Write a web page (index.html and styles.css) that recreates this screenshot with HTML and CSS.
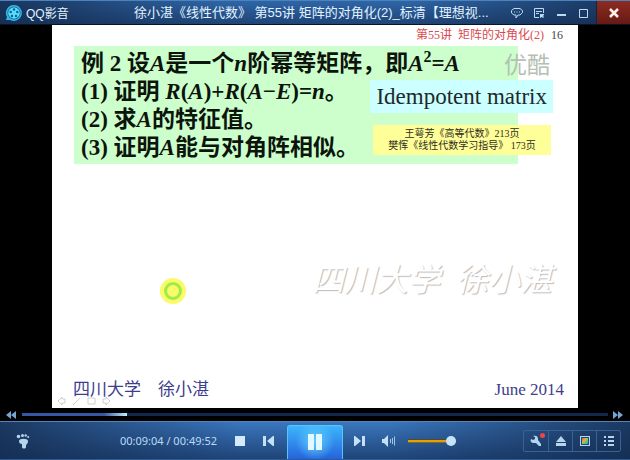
FILE: index.html
```html
<!DOCTYPE html>
<html lang="zh-CN">
<head>
<meta charset="utf-8">
<title>QQ影音</title>
<link rel="stylesheet" href="styles.css">
</head>
<body>
<div class="player">
  <header class="titlebar">
    <div class="brand">
      <svg class="logo" width="18" height="18" viewBox="0 0 18 18">
        <path d="M9 1a8 8 0 1 1-4 15H1l1-3A8 8 0 0 1 9 1z" fill="#35b6e6"/>
        <circle cx="9" cy="9" r="6.5" fill="#0b5f93"/>
        <circle cx="9" cy="9" r="5.8" fill="#58dcfa"/>
        <g fill="#0a5f94"><circle cx="9" cy="5.500" r="1.200"/><circle cx="12.300" cy="8" r="1.200"/><circle cx="11" cy="12" r="1.200"/><circle cx="7" cy="12" r="1.200"/><circle cx="5.700" cy="8" r="1.200"/></g>
      </svg>
      <span>QQ影音</span>
    </div>
    <h1 class="title">徐小湛《线性代数》 第55讲 矩阵的对角化(2)_标清【理想视...</h1>
    <div class="window-buttons">
      <button class="win" aria-label="反馈">
        <svg width="12" height="12" viewBox="0 0 12 12" fill="none" stroke="#b9dbf3"><path d="M3 1.500h6L11.500 3.500v2L9 8H7l-2 3V8H3L.5 6V3.500z"/><path d="M3.500 4.500v1M6 4.500v1M8.500 4.500v1"/></svg>
      </button>
      <button class="win" aria-label="主菜单">
        <svg width="12" height="12" viewBox="0 0 12 12" fill="none" stroke="#b9dbf3"><path d="M6 10.500H1.500v-9h9V6M3 4.500h6M3 6.500h3"/><path d="M7 7h4v1l-1 1 1 1-1 1-1-1-2 1z" fill="#b9dbf3" stroke="none"/></svg>
      </button>
      <button class="win" aria-label="最小化">
        <svg width="12" height="12" viewBox="0 0 12 12"><path d="M2 7h9v2H2z" fill="#b9dbf3"/></svg>
      </button>
      <button class="win" aria-label="最大化">
        <svg width="12" height="12" viewBox="0 0 12 12"><path d="M2.500 2.500h8v8h-8z" fill="none" stroke="#b9dbf3"/></svg>
      </button>
      <button class="win close" aria-label="关闭">
        <svg width="12" height="12" viewBox="0 0 12 12"><path d="M2 2l8 8M10 2l-8 8" stroke="#fff0ec" stroke-width="2.500"/></svg>
      </button>
    </div>
  </header>

  <main class="video">
    <article class="slide">
      <p class="lecture"><span class="lecture-name">第55讲&nbsp; 矩阵的对角化(2)</span> <span>16</span></p>
      <section class="problem">
        <p>例 2 设<i>A</i>是一个<i>n</i>阶幂等矩阵，即<i>A</i><sup>2</sup>=<i>A</i></p>
        <p>(1) 证明 <i>R</i>(<i>A</i>)+<i>R</i>(<i>A</i>−<i>E</i>)=<i>n</i>。</p>
        <p>(2) 求<i>A</i>的特征值。</p>
        <p>(3) 证明<i>A</i>能与对角阵相似。</p>
      </section>
      <span class="youku">优酷</span>
      <aside class="term">Idempotent matrix</aside>
      <aside class="refs">王萼芳《高等代数》213页<br>樊恽《线性代数学习指导》 173页</aside>
      <svg class="pointer" width="28" height="28" viewBox="0 0 28 28"><circle cx="14" cy="14" r="13" fill="#fbfb68"/><circle cx="14" cy="14" r="7.500" fill="none" stroke="#9bed4c" stroke-width="3"/></svg>
      <p class="watermark">四川大学&nbsp; 徐小湛</p>
      <svg class="slide-nav" width="54" height="10" viewBox="0 0 54 10" fill="none" stroke="#cfcfcf"><path d="M1 5l4-4v2h3v4H5v2zM16 9l7-7M31 2h7v6h-7zM53 5l-4-4v2h-3v4h3v2z"/></svg>
      <footer class="slide-footer"><span class="author">四川大学　徐小湛</span><span>June 2014</span></footer>
    </article>
  </main>

  <div class="seekbar">
    <button class="skip" aria-label="快退"><svg width="11" height="8" viewBox="0 0 11 8"><path d="M5 0v8L0 4zM10 0v8L5 4z" fill="#76a5d2"/></svg></button>
    <input class="seek" type="range" min="0" max="2992" value="544" aria-label="播放进度">
    <button class="skip" aria-label="快进"><svg width="11" height="8" viewBox="0 0 11 8"><path d="M0 0v8l5-4zM5 0v8l5-4z" fill="#76a5d2"/></svg></button>
  </div>

  <footer class="controls">
    <div class="side left">
      <button class="icon foot" aria-label="播放记录">
        <svg width="14" height="16" viewBox="0 0 14 16" fill="#b4d5ee"><circle cx="2.500" cy="3.500" r="1.800"/><circle cx="6.500" cy="2.500" r="1.500"/><circle cx="9.700" cy="2.500" r="1.200"/><circle cx="12.200" cy="4" r="1"/><path d="M3 8c0-3 9-3 9 0 0 2-1 3-2 4v2c0 2-4 2-4 0v-3C4 11 3 10 3 8z"/></svg>
      </button>
      <span class="time">00:09:04 / 00:49:52</span>
      <button class="icon stop" aria-label="停止"><svg width="12" height="12" viewBox="0 0 12 12"><path d="M1 1h10v10H1z" fill="#d2eafa"/></svg></button>
      <button class="icon" aria-label="上一个"><svg width="12" height="12" viewBox="0 0 12 12"><path d="M0 1h3v10H0zM11 1v10H10L4 6l6-5z" fill="#c5e1f6"/></svg></button>
    </div>
    <button class="pause" aria-label="暂停"><svg width="14" height="16" viewBox="0 0 14 16"><path d="M0 0h6v16H0zM8 0h6v16H8z" fill="#e4f8ff"/></svg></button>
    <div class="side right">
      <button class="icon" aria-label="下一个"><svg width="12" height="12" viewBox="0 0 12 12"><path d="M1 1v10h1l6-5-6-5zM9 1h3v10H9z" fill="#c5e1f6"/></svg></button>
      <div class="sound">
        <button class="icon" aria-label="静音"><svg width="14" height="12" viewBox="0 0 14 12"><path d="M0 4h2l4-4v12L2 8H0z" fill="#c5e1f6"/><path d="M8.500 4v4M10.500 3v6M12.500 1.500v9" stroke="#9fc6e6"/></svg></button>
        <input class="volume" type="range" min="0" max="100" value="100" aria-label="音量">
      </div>
      <div class="tools">
        <button class="tool wrench" aria-label="工具"><svg width="12" height="12" viewBox="0 0 12 12"><path d="M1 4l2 1 2-1V2L3 1c3-1 5 0 5 3v1l3 4v2H9L6 8H4C1 8 0 6 1 4z" fill="#b4d5ee"/></svg></button>
        <button class="tool" aria-label="打开"><svg width="12" height="12" viewBox="0 0 12 12"><path d="M6 1l5 6H1zM1 8h10v3H1z" fill="#b4d5ee"/></svg></button>
        <button class="tool" aria-label="画面设置"><svg width="12" height="12" viewBox="0 0 12 12"><defs><linearGradient id="hue" x2="1" y2="1"><stop stop-color="#f44336"/><stop offset=".35" stop-color="#f3a43c"/><stop offset=".65" stop-color="#5bd06c"/><stop offset="1" stop-color="#3386e8"/></linearGradient></defs><path d="M1 1h10v10H1z" fill="#b4d5ee"/><path d="M2 2h8v8H2z" fill="#18497f"/><path d="M3 3h6v6H3z" fill="url(#hue)"/></svg></button>
        <button class="tool" aria-label="播放列表"><svg width="12" height="12" viewBox="0 0 12 12"><path d="M1 1h2v2H1zM5 1h6v2H5zM1 5h2v2H1zM5 5h6v2H5zM1 9h2v2H1zM5 9h6v2H5z" fill="#b4d5ee"/></svg></button>
      </div>
    </div>
  </footer>
</div>
</body>
</html>
```
FILE: styles.css
```css
* { box-sizing: border-box; }

body {
  margin: 0;
  background: #000;
  font-family: "Liberation Sans", "Noto Sans CJK SC", sans-serif;
}

h1, p { margin: 0; }

button {
  display: flex;
  align-items: center;
  justify-content: center;
  padding: 0;
  border: 0;
  background: none;
}

input[type="range"] {
  appearance: none;
  margin: 0;
  background: none;
}

.player {
  display: flex;
  flex-direction: column;
  height: 100vh;
  overflow: hidden;
}

/* Title bar */
.titlebar {
  display: flex;
  flex: none;
  height: 25px;
  border-top: 1px solid #4a83bd;
  border-bottom: 1px solid #091425;
  background: linear-gradient(90deg, #13294acc, #13294a00 35%, #13294a00 65%, #13294acc), linear-gradient(#2f66a6, #1f4478);
  color: #e2f3ff;
}

.brand {
  display: flex;
  flex: none;
  align-items: center;
  gap: 3px;
  width: 134px;
  padding-left: 5px;
  font-size: 12px;
}

.title {
  flex: 1;
  min-width: 0;
  font-size: 13px;
  font-weight: normal;
  line-height: 24px;
  white-space: nowrap;
}

.window-buttons { display: flex; flex: none; margin-left: 10px; }
.win { width: 22px; }
.close {
  width: 34px;
  margin-left: 2px;
  border-left: 1px solid #142440;
  background: linear-gradient(#8e2b20, #661a14);
}

/* Video */
.video {
  display: flex;
  flex: 1;
  justify-content: center;
  min-height: 0;
  background: #000;
}

.slide {
  position: relative;
  display: flex;
  flex-direction: column;
  height: 100%;
  aspect-ratio: 526 / 383;
  background: #fff;
  font-family: "Liberation Serif", "Noto Sans CJK SC", serif;
}

.lecture {
  padding: 0 15px;
  color: #444;
  font-size: 12px;
  line-height: 21px;
  text-align: right;
}
.lecture-name { margin-right: 4px; color: #d94a50; }

.problem {
  margin: 0 60px 0 22px;
  padding: 4px 7px 2px;
  background: #ccffcc;
  color: #0c140c;
  font-size: 23px;
  font-weight: bold;
  line-height: 28px;
  white-space: nowrap;
}
.problem sup { font-size: 16px; line-height: 0; }

.term,
.refs,
.youku {
  position: absolute;
  text-align: center;
  white-space: nowrap;
}
.youku {
  top: 25px;
  right: 28px;
  color: #b4c0b4;
  font-size: 23px;
  line-height: 32px;
}
.term {
  top: 55px;
  right: 25px;
  padding: 0 6px;
  background: #ccffff;
  color: #20292b;
  font-size: 23px;
  line-height: 33px;
}
.refs {
  top: 100px;
  right: 27px;
  width: 178px;
  padding: 3px 0;
  background: #ffff99;
  color: #2e2e20;
  font-size: 10px;
  line-height: 12px;
}

.pointer { position: absolute; top: 252px; left: 107px; }

.watermark {
  margin: 92px 26px 0 0;
  color: #fff;
  font-size: 32px;
  font-style: italic;
  line-height: 48px;
  text-align: right;
  text-shadow: 1px 1px 1px #bbb;
}

.slide-footer {
  display: flex;
  align-items: center;
  justify-content: space-between;
  margin-top: auto;
  padding: 0 14px 6px 21px;
  color: #3d3d8c;
  font-size: 17px;
  line-height: 24px;
}
.slide-nav { position: absolute; bottom: 2px; left: 5px; }

/* Seek bar */
.seekbar {
  display: flex;
  flex: none;
  align-items: center;
  gap: 5px;
  height: 13px;
  padding: 0 6px;
}
.seek { flex: 1; min-width: 0; height: 8px; }
.seek::-webkit-slider-runnable-track {
  height: 3px;
  background: linear-gradient(90deg, #3458a5 14%, #c5f2ff 18%, #13284d 18%);
}
.seek::-webkit-slider-thumb { appearance: none; width: 1px; height: 3px; }

/* Controls */
.controls {
  display: grid;
  grid-template-columns: 1fr auto 1fr;
  flex: none;
  height: 39px;
  border-top: 1px solid #4f86bd;
  border-bottom: 1px solid #2c5c95;
  background: linear-gradient(90deg, #13294acc, #13294a00 38%, #13294a00 62%, #13294acc), linear-gradient(#3a76bd, #1f4478);
}

.side { display: flex; align-items: center; }
.left { gap: 17px; padding-right: 12px; }
.right { gap: 17px; padding: 0 9px 0 10px; }

.foot { margin: 0 auto 0 16px; }
.time {
  color: #b9dcf8;
  font-family: "Noto Sans", "Liberation Sans", sans-serif;
  font-size: 11px;
  white-space: nowrap;
}

.pause {
  width: 56px;
  margin-top: 3px;
  padding-bottom: 2px;
  border: 1px solid #57c4fb;
  border-bottom: 0;
  border-radius: 3px 3px 0 0;
  background: radial-gradient(circle at 50% 45%, #60cbff, #60cbff00 60%), linear-gradient(#3db5fc, #2563dc);
}

.sound { display: flex; align-items: center; gap: 12px; }
.volume { width: 48px; height: 12px; }
.volume::-webkit-slider-runnable-track {
  height: 4px;
  border-top: 1px solid #4b4b42;
  border-bottom: 1px solid #7a6a34;
  background: #e5a100;
}
.volume::-webkit-slider-thumb {
  appearance: none;
  width: 10px;
  height: 10px;
  margin-top: -4px;
  border-radius: 50%;
  background: #c5e3fa;
}

.tools {
  display: flex;
  margin-left: auto;
  border: 1px solid #366296;
  border-radius: 2px;
}
.tool { width: 24px; height: 20px; }
.tool + .tool { border-left: 1px solid #366296; }
.wrench { position: relative; }
.wrench::after {
  position: absolute;
  top: 2px;
  right: 3px;
  width: 5px;
  height: 5px;
  border-radius: 50%;
  background: #f34444;
  content: "";
}
```
